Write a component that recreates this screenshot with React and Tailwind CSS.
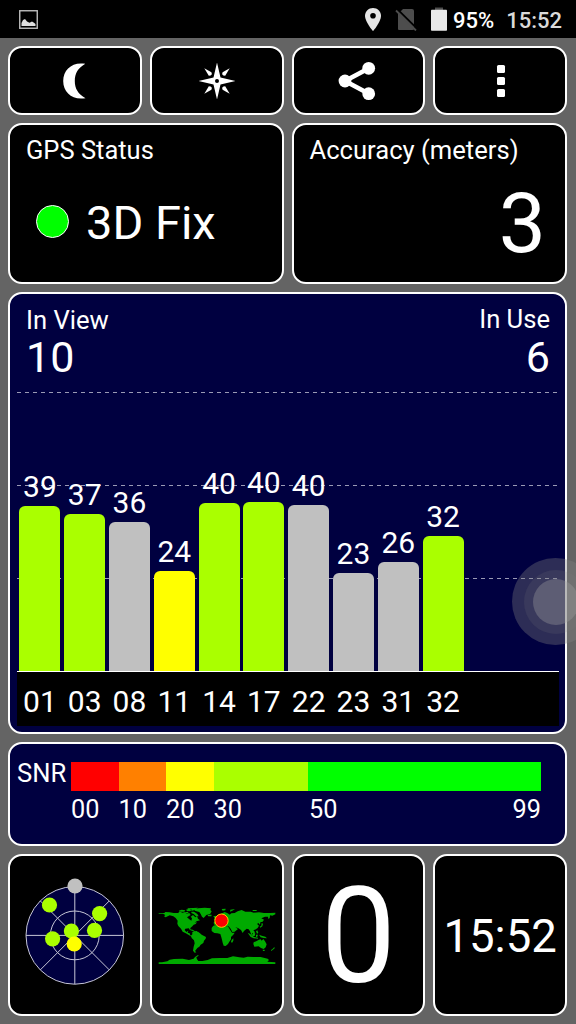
const SATELLITES = [
  { id: "01", snr: 39, height: 165, color: "#aaff00" },
  { id: "03", snr: 37, height: 157, color: "#aaff00" },
  { id: "08", snr: 36, height: 149.5, color: "#c0c0c0" },
  { id: "11", snr: 24, height: 100, color: "#ffff00" },
  { id: "14", snr: 40, height: 168, color: "#aaff00" },
  { id: "17", snr: 40, height: 169, color: "#aaff00" },
  { id: "22", snr: 40, height: 166.5, color: "#c0c0c0" },
  { id: "23", snr: 23, height: 98.5, color: "#c0c0c0" },
  { id: "31", snr: 26, height: 109, color: "#c0c0c0" },
  { id: "32", snr: 32, height: 135, color: "#aaff00" },
];

const SKY_DOTS = [
  { x: 75, y: 36, color: "#c0c0c0" },
  { x: 49.5, y: 55, color: "#aaff00" },
  { x: 99.6, y: 63.6, color: "#aaff00" },
  { x: 71.4, y: 81, color: "#aaff00" },
  { x: 94.5, y: 80.4, color: "#aaff00" },
  { x: 52.6, y: 88.8, color: "#aaff00" },
  { x: 74.2, y: 94, color: "#ffff00" },
];

const CARD = "border-2 border-white rounded-[14px] overflow-hidden";

function StatusBar() {
  return (
    <div className="h-[38px] bg-black flex items-center">
      <svg className="ml-[19px]" width="19" height="19" viewBox="0 0 19 19">
        <rect x="0.75" y="0.75" width="17.5" height="17.5" fill="none" stroke="#bdbdbd" strokeWidth="1.4" />
        <path d="M2.5 16V13L4 10L6 9L8 11.5L10.5 12.7L13 11.5L15 12.8L16.5 14V16Z" fill="#e0e0e0" />
      </svg>
      <svg className="ml-[327px] mt-[1px]" width="16" height="23" viewBox="0 0 16 23">
        <path d="M8 0C3.5 0 0 3.5 0 7.9C0 13.8 8 23 8 23S16 13.8 16 7.9C16 3.5 12.5 0 8 0Z" fill="#e6e6e6" />
        <circle cx="8" cy="7.8" r="2.8" fill="#000" />
      </svg>
      <svg className="ml-[14px] mt-[2px]" width="22" height="22" viewBox="0 0 22 22">
        <path d="M8 0H17Q19 0 19 2V20Q19 21 17.5 21H4Q3 21 3 20V5Z" fill="#4d4d4d" />
        <path d="M2 0L23 20.5" stroke="#000" strokeWidth="2" />
        <path d="M1 1.5L21 21.5" stroke="#4d4d4d" strokeWidth="1.8" />
      </svg>
      <svg className="ml-[14px]" width="16" height="24" viewBox="0 0 16 24">
        <rect x="4" y="0.5" width="8" height="3" fill="#4d4d4d" />
        <rect x="0" y="2.8" width="16" height="21" rx="0.8" fill="#e9e9e9" />
      </svg>
      <span className="ml-[6px] mt-[3px] text-[22px] leading-[26px] font-medium text-white">95%</span>
      <span className="ml-[12px] mt-[3px] text-[22px] leading-[26px] font-medium text-[#dadada]">15:52</span>
    </div>
  );
}

function MoonIcon() {
  return (
    <svg width="24" height="36" viewBox="0 0 24 36">
      <path d="M22.3 0.8C9.5-1.6 0.2 6.5 0.2 18S9.5 37.6 22.5 35.2C15 31 11.8 25.5 11.8 18S15 5 22.3 0.8Z" fill="#fff" />
    </svg>
  );
}

function CompassIcon() {
  return (
    <svg width="38" height="38" viewBox="0 0 38 38">
      <g fill="#fff">
        <path d="M19 0.5L22.5 15.5L37.5 19L22.5 22.5L19 37.5L15.5 22.5L0.5 19L15.5 15.5Z" />
        <path d="M6.3 6.3L13.4 10.3Q15 13.6 10.8 13.8Z" />
        <path d="M31.7 6.3L24.6 10.3Q23 13.6 27.2 13.8Z" />
        <path d="M6.3 31.7L13.4 27.7Q15 24.4 10.8 24.2Z" />
        <path d="M31.7 31.7L24.6 27.7Q23 24.4 27.2 24.2Z" />
      </g>
      <circle cx="19" cy="19" r="2" fill="#000" />
    </svg>
  );
}

function ShareIcon() {
  return (
    <svg className="-ml-[3px]" width="38" height="40" viewBox="0 0 38 40">
      <path d="M30.5 7.5L7 20L30.5 32.5" fill="none" stroke="#fff" strokeWidth="4.6" />
      <circle cx="30.7" cy="7.3" r="6.4" fill="#fff" />
      <circle cx="7" cy="20" r="6.4" fill="#fff" />
      <circle cx="30.7" cy="32.7" r="6.4" fill="#fff" />
    </svg>
  );
}

function MoreIcon() {
  return (
    <div className="flex flex-col gap-[4px] ml-[1px]">
      <div className="w-[8px] h-[8px] rounded-[1.5px] bg-white" />
      <div className="w-[8px] h-[8px] rounded-[1.5px] bg-white" />
      <div className="w-[8px] h-[8px] rounded-[1.5px] bg-white" />
    </div>
  );
}

function ToolButton({ label, children }) {
  return (
    <button className={`${CARD} bg-black flex items-center justify-center`} aria-label={label}>
      {children}
    </button>
  );
}

function GridLine({ className }) {
  return (
    <div
      className={`absolute left-0 w-[540px] h-px bg-[repeating-linear-gradient(90deg,#9a9ab5_0_4px,transparent_4px_8px)] ${className}`}
    />
  );
}

function SignalChart() {
  return (
    <section className={`${CARD} h-[442px] bg-[#000040]`}>
      <div className="h-[86px] pl-4 pr-[15px] pt-[10px] flex justify-between">
        <div>
          <div className="mt-px text-[25.6px] leading-[30px]">In View</div>
          <div className="mt-px text-[43px] leading-[43px]">10</div>
        </div>
        <div className="text-right">
          <div className="text-[25.6px] leading-[30px]">In Use</div>
          <div className="mt-[2px] text-[43px] leading-[43px]">6</div>
        </div>
      </div>
      <div className="relative ml-[7px] mr-[6px] h-[292px] border-b border-white">
        <GridLine className="top-[12px]" />
        <GridLine className="top-[105px]" />
        <GridLine className="top-[198px]" />
        <div className="relative h-full flex items-end gap-[3.8px] pl-[2.4px]">
          {SATELLITES.map((s) => (
            <div key={s.id} className="w-[41px] flex flex-col items-center">
              <div className="mb-[4px] text-[30px] leading-[30px]">{s.snr}</div>
              <div className="w-full rounded-t-[6px]" style={{ height: s.height, background: s.color }} />
            </div>
          ))}
        </div>
      </div>
      <div className="ml-[7px] mr-[6px] h-[54px] bg-black flex gap-[3.8px] pl-[2.4px] pt-[15px]">
        {SATELLITES.map((s) => (
          <div key={s.id} className="w-[41px] text-center text-[30px] leading-[30px]">
            {s.id}
          </div>
        ))}
      </div>
    </section>
  );
}

function SnrLegend() {
  return (
    <section className={`${CARD} h-[104px] bg-[#000040] flex pl-[7px] pt-[18px]`}>
      <div className="w-[54px] text-[25.6px] leading-[22px]">SNR</div>
      <div className="w-[470px]">
        <div className="flex h-[29px]">
          <div className="w-[47.5px] bg-[#ff0000]" />
          <div className="w-[47.5px] bg-[#ff8000]" />
          <div className="w-[47.5px] bg-[#ffff00]" />
          <div className="w-[94.5px] bg-[#aaff00]" />
          <div className="flex-1 bg-[#00ff00]" />
        </div>
        <div className="flex mt-[4px] text-[25.3px] leading-[30px]">
          <div className="w-[47.5px]">00</div>
          <div className="w-[47.5px]">10</div>
          <div className="w-[47.5px]">20</div>
          <div className="w-[95.5px]">30</div>
          <div className="flex-1">50</div>
          <div>99</div>
        </div>
      </div>
    </section>
  );
}

function SkyView() {
  return (
    <svg width="110" height="120" viewBox="20 25 110 120">
      <circle cx="74.8" cy="85.4" r="48.8" fill="#000040" />
      <g fill="none" stroke="#c6c6d6" strokeWidth="1">
        <circle cx="74.8" cy="85.4" r="48.8" />
        <circle cx="74.8" cy="85.4" r="24.4" />
        <path d="M26 85.4H123.6M74.8 36.6V134.2M40.3 50.9L109.3 119.9M109.3 50.9L40.3 119.9" />
      </g>
      {SKY_DOTS.map((d, i) => (
        <circle key={i} cx={d.x} cy={d.y} r="7.6" fill={d.color} />
      ))}
    </svg>
  );
}

function WorldMap() {
  return (
    <svg className="mt-[2px]" width="118" height="60" viewBox="37 48 354 180">
      <g fill="#00aa00">
        {/* North and Central America */}
        <path d="M39 69H56L59 66L72 67L84 69L98 69L101 64L110 68L119 66L123 71L131 69L135 75L130 78L124 82L131 88L137 92L139 85L135 80L142 75L149 82L154 78L157 86L163 91L153 94L147 98L154 97L150 102L144 104L140 109L134 114L134 121L129 115L119 116L117 120L122 126L128 122L126 128L132 130L134 136L140 138L138 140L128 134L119 129L111 125L106 116L98 108L95 101L96 92L90 84L83 79L72 76L60 82L55 79L59 75L52 71H39Z" />
        <path d="M99 62L108 59L119 61L116 65L105 65ZM121 59L130 57L138 60L133 64L124 63ZM119 67L126 65L129 69L122 70ZM137 65L145 65L155 72L159 79L151 79L144 72L137 69ZM126 55L142 54L157 53L151 58L141 62L135 61L139 58L126 58ZM131 118L141 119L147 122L141 123L133 120ZM149 123L154 123L154 126L149 125Z" />
        {/* Greenland */}
        <path d="M146 57L158 55L177 53L196 55L194 60L198 64L194 71L182 75L174 84L169 80L165 72L161 66L147 62Z" />
        {/* South America */}
        <path d="M140 126L146 123L157 125L163 130L168 134L181 141L180 146L175 152L173 159L165 164L161 170L155 174L151 179L148 183L152 187L147 188L142 182L144 170L147 160L145 151L138 144L136 137L140 133Z" />
        {/* Europe and Asia */}
        <path d="M204 97L211 94L209 89L216 85L223 80L216 78L226 71L237 66L246 70L252 74L257 70L267 69L276 64L288 60L299 65L315 65L324 68L340 67L355 69L374 69L389 68L389 73L380 77L373 76L372 84L368 87L367 80L358 80L347 85L355 89L351 95L344 97L343 104L337 98L335 103L340 107L336 114L328 119L323 120L328 127L324 132L319 128L321 137L317 134L313 124L309 118L303 116L295 123L291 129L286 120L277 114L269 112L277 117L267 125L260 126L255 116L249 109L239 107L231 104L226 100L217 103L205 104Z" />
        <path d="M203 79L210 77L214 84L213 89L204 90L208 86ZM185 74H198L197 79L188 79ZM228 57L240 56L239 61L231 62ZM254 59L268 57L260 62L253 65ZM321 60H333V63H321Z" />
        {/* Africa */}
        <path d="M203 107L213 104L225 103L235 108L247 109L253 119L259 128L267 128L263 134L256 141L256 148L251 155L247 162L240 168L234 167L231 158L229 149L227 142L224 132L215 130L206 129L198 123L198 114ZM258 150L263 145L263 152L259 159L256 155Z" />
        {/* Islands and Australia */}
        <path d="M342 110L347 107L348 99L352 101L350 109L344 113ZM331 124L335 121L338 129L334 131ZM306 128L314 132L320 138L325 141L337 143L337 146L324 145L315 141ZM319 135L324 129L329 130L327 138L321 139ZM331 134L337 134L335 140L331 141ZM340 134L348 137L359 140L364 145L354 144L345 142Z" />
        <path d="M324 157L333 153L340 149L345 148L348 152L353 147L358 154L363 163L360 172L354 177L346 174L339 169L326 170L323 162ZM351 179H357V183H352ZM376 180L380 178L386 171L387 175L381 180L376 183Z" />
        {/* Antarctica */}
        <path d="M39 217L49 217L65 214L72 209L85 207L111 206L130 210L144 206L148 201L157 195L159 197L152 202L154 208L158 213L170 213L186 210L199 205L222 204L245 204L262 199L281 202L294 203L306 200L323 201L345 201L366 206L370 210L365 215L389 217V222H39Z" />
      </g>
      <circle cx="227.5" cy="92" r="20" fill="#f00" stroke="#ffcc00" strokeWidth="3" />
    </svg>
  );
}

export default function App() {
  return (
    <div className="relative w-[576px] h-[1024px] overflow-hidden bg-[#646464] text-white font-['Roboto',sans-serif]">
      <StatusBar />
      <main className="pl-2 pr-[9px] pt-2 flex flex-col gap-2">
        <div className="grid grid-cols-4 gap-2 h-[69px]">
          <ToolButton label="Night mode"><MoonIcon /></ToolButton>
          <ToolButton label="Compass"><CompassIcon /></ToolButton>
          <ToolButton label="Share"><ShareIcon /></ToolButton>
          <ToolButton label="More"><MoreIcon /></ToolButton>
        </div>

        <div className="grid grid-cols-2 gap-2 h-[161px]">
          <section className={`${CARD} bg-black pl-4 pt-[10px]`}>
            <div className="text-[25.5px] leading-[30px]">GPS Status</div>
            <div className="flex items-center mt-[28px] pl-[10px]">
              <div className="w-[33px] h-[33px] rounded-full bg-[#00ff00] border-[1.5px] border-white" />
              <span className="ml-[17px] pt-[3px] text-[47px] leading-[53px]">3D Fix</span>
            </div>
          </section>
          <section className={`${CARD} bg-black pl-4 pr-[19px] pt-[10px]`}>
            <div className="text-[25.6px] leading-[30px]">Accuracy (meters)</div>
            <div className="mt-[16px] text-right text-[84px] leading-[85px]">3</div>
          </section>
        </div>

        <SignalChart />
        <SnrLegend />

        <div className="grid grid-cols-4 gap-2 h-[162px]">
          <section className={`${CARD} bg-black flex items-center justify-center`}><SkyView /></section>
          <section className={`${CARD} bg-black flex items-center justify-center`}><WorldMap /></section>
          <section className={`${CARD} bg-black flex items-center justify-center text-[134px] leading-[160px] pt-[4px]`}>0</section>
          <section className={`${CARD} bg-black flex items-center justify-center text-[45.5px] leading-[54px] pt-[4px]`}>15:52</section>
        </div>
      </main>

      {/* Floating touch button, half off the right edge */}
      <div className="absolute left-[512px] top-[558px] w-[87px] h-[87px] rounded-full bg-[#808080]/35 flex items-center justify-center">
        <div className="w-[64px] h-[64px] rounded-full bg-[#808080]/15 flex items-center justify-center">
          <div className="w-[46px] h-[46px] rounded-full bg-[#a0a0a0]/35" />
        </div>
      </div>
    </div>
  );
}
